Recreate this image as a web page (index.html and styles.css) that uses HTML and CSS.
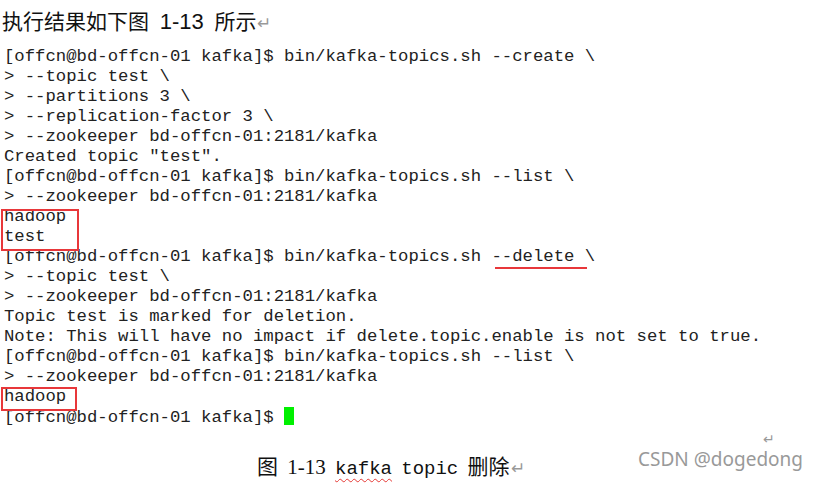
FILE: index.html
```html
<!DOCTYPE html>
<html>
<head>
  <meta charset="UTF-8">
  <link rel="stylesheet" href="styles.css">
</head>
<body>
  <p class="lead">执行结果如下图 <span class="num">1-13</span> 所示<span class="ret">↵</span></p>

  <div class="term">
    <div class="line">[offcn@bd-offcn-01 kafka]$ bin/kafka-topics.sh --create \</div>
    <div class="line">&gt; --topic test \</div>
    <div class="line">&gt; --partitions 3 \</div>
    <div class="line">&gt; --replication-factor 3 \</div>
    <div class="line">&gt; --zookeeper bd-offcn-01:2181/kafka</div>
    <div class="line">Created topic "test".</div>
    <div class="line">[offcn@bd-offcn-01 kafka]$ bin/kafka-topics.sh --list \</div>
    <div class="line">&gt; --zookeeper bd-offcn-01:2181/kafka</div>
    <div class="mark mark-two">
      <div class="line">hadoop</div>
      <div class="line">test</div>
    </div>
    <div class="line">[offcn@bd-offcn-01 kafka]$ bin/kafka-topics.sh <span class="underline">--delete </span>\</div>
    <div class="line">&gt; --topic test \</div>
    <div class="line">&gt; --zookeeper bd-offcn-01:2181/kafka</div>
    <div class="line">Topic test is marked for deletion.</div>
    <div class="line">Note: This will have no impact if delete.topic.enable is not set to true.</div>
    <div class="line">[offcn@bd-offcn-01 kafka]$ bin/kafka-topics.sh --list \</div>
    <div class="line">&gt; --zookeeper bd-offcn-01:2181/kafka</div>
    <div class="mark mark-one">
      <div class="line">hadoop</div>
    </div>
    <div class="line">[offcn@bd-offcn-01 kafka]$ <span class="cursor"></span></div>
  </div>

  <div class="ret-line"><span class="ret">↵</span></div>

  <div class="caption-row">
    <p class="caption">图 1-13 <span class="mono spell">kafka</span> <span class="mono">topic</span> 删除<span class="ret">↵</span></p>
    <span class="watermark">CSDN @dogedong</span>
  </div>
</body>
</html>
```

FILE: styles.css
```css
body {
  margin: 0;
  width: 818px;
  height: 485px;
  background: #fff;
  color: #1a1a1a;
  font-family: "Noto Sans CJK SC", "Noto Sans", sans-serif;
  overflow: hidden;
}
.lead {
  margin: 0;
  height: 47px;
  line-height: 40px;
  padding-left: 2px;
  font-size: 21px;
  color: #111;
  word-spacing: 6px;
}
.lead .num {
  font-family: "Liberation Sans", sans-serif;
  font-size: 22px;
}
.ret {
  color: #999;
  font-size: 0.8em;
  margin-left: 1px;
}
.term {
  padding-left: 4px;
  font-family: "Liberation Mono", monospace;
  font-size: 17.3px;
  line-height: 20px;
  color: #222;
}
.line {
  white-space: pre;
  height: 20px;
}
.mark {
  position: relative;
  width: fit-content;
}
.mark::before {
  content: '';
  position: absolute;
  left: -3px;
  right: -13px;
  top: 2px;
  bottom: -4px;
  border: 2px solid #e8373a;
}
.mark-one::before {
  top: 0;
  bottom: -4px;
  right: -11px;
}
.underline {
  position: relative;
}
.underline::after {
  content: '';
  position: absolute;
  left: 4px;
  right: -2px;
  bottom: -3px;
  height: 2px;
  background: #e8373a;
}
.cursor {
  display: inline-block;
  width: 10px;
  height: 18px;
  background: #00f000;
  vertical-align: -3px;
}
.ret-line {
  height: 18px;
  line-height: 18px;
  padding-left: 762px;
  font-size: 18px;
}
.caption-row {
  display: flex;
  align-items: center;
  height: 40px;
}
.caption {
  margin: 0 0 0 257px;
  font-family: "Liberation Serif", "Noto Sans CJK SC", serif;
  font-size: 21px;
  color: #111;
  word-spacing: 4px;
}
.caption .mono {
  font-family: "Liberation Mono", monospace;
  font-size: 19px;
}
.spell {
  text-decoration: underline wavy #e53935;
  text-decoration-thickness: 1px;
  text-underline-offset: 4px;
}
.watermark {
  margin-left: auto;
  margin-right: 15px;
  font-family: "Noto Sans", sans-serif;
  font-size: 19px;
  color: #999;
  margin-top: -12px;
}
```
